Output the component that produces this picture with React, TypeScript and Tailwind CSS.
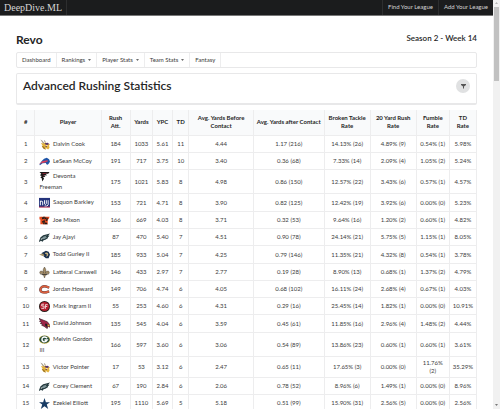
import React from "react";

type Team = "min" | "buf" | "atl" | "nyg" | "cin" | "phi" | "lar" | "no" | "chi" | "sf" | "ari" | "gb" | "dal";

const logos: Record<Team, React.ReactNode> = {
  min: (
    <>
      <path d="M5 3 9 9 4 9 8 14 6 17 11 22 15 23 14 19 20 23 23 19 22 14 24 11 18 10 14 7 11 9Z" fill="#e5b43c" />
      <path d="M3 1 7 3 12 9 9 10ZM11 2 13 3 15 7 12 7Z" fill="#a39b90" />
      <path d="M12 9 19 8 22 11 18 13 14 12ZM13 15 18 16 16 18Z" fill="#56356f" />
      <path d="M14 13 19 13 18 16Z" fill="#f8e7c9" />
      <path d="M6 14 11 17 15 23 10 21Z" fill="#9c7527" />
    </>
  ),
  buf: (
    <>
      <path d="M1 18 6 11 11 6 17 4 22 7 24 12 22 16 19 19 16 18 15 15 8 16 2 20Z" fill="#1f55a8" />
      <path d="M0 18 8 11 18 9 20 11 14 14 7 15Z" fill="#d9405c" />
    </>
  ),
  atl: (
    <>
      <path d="M1 2H23L20 6H14L18 9 11 10 14 13 9 13 11 17 7 23 6 16 3 14 6 11 2 9 5 6Z" fill="#171717" />
      <path d="M7 5 19 4 14 6 8 7ZM8 10 12 9 9 12Z" fill="#8f2636" />
    </>
  ),
  nyg: (
    <>
      <path d="M0 2H24V22H0Z" fill="#25347c" />
      <path d="M3 18V8M3 10Q7 7 8 11V18M12 7V15Q14 19 16 14V7M20 7V17Q19 21 12 20" fill="none" stroke="#fff" strokeWidth="2" />
      <path d="M0 21H24V23H0Z" fill="#b82a4b" />
    </>
  ),
  cin: (
    <>
      <path d="M1 4H23L21 9H19V20H3V10H1Z" fill="#e64c1f" />
      <path d="M6 4 11 8 7 9ZM15 4 17 8 12 10ZM7 13 13 14 7 17ZM20 5 18 13 14 12ZM15 15 19 20 12 20Z" fill="#171717" />
      <path d="M9 4H13L12 9 9 8ZM10 11 13 12 12 20 9 20Z" fill="#202020" />
    </>
  ),
  phi: (
    <>
      <path d="M0 20 3 12 9 7 24 3 20 8 23 8 19 12 20 13 14 17 10 18 8 21 4 19 1 22Z" fill="#24393d" />
      <path d="M8 11 18 7 14 11 18 11 12 15 7 16Z" fill="#7f9598" />
      <path d="M3 15 8 13 6 17Z" fill="#eef1f1" />
    </>
  ),
  lar: (
    <>
      <path d="M5 11 9 7 15 4 21 6 24 12 21 20 15 20 10 16Z" fill="#182e4d" />
      <path d="M14 8Q21 7 20 13 19 17 15 16L17 14Q18 10 13 11Z" fill="#c9b27e" />
      <path d="M0 12 9 10 12 15 8 15Z" fill="#a8946a" />
    </>
  ),
  no: (
    <>
      <path d="M12 0Q17 6 14 13 16 7 21 9 25 13 19 17 20 12 16 15L17 17 14 18 12 24 10 18 7 17 8 15Q4 12 5 17 -1 13 3 9 8 7 10 13 7 6 12 0Z" fill="#a58d66" stroke="#4b4235" strokeWidth="1" />
      <path d="M7 15H17V17H7Z" fill="#302d29" />
    </>
  ),
  chi: (
    <>
      <path d="M22 8Q13 3 7 6 1 10 4 16 9 21 22 16" fill="none" stroke="#3b3440" strokeWidth="5" />
      <path d="M22 8Q13 3 7 6 1 10 4 16 9 21 22 16" fill="none" stroke="#dd5f3c" strokeWidth="4" />
    </>
  ),
  sf: (
    <>
      <ellipse cx="12" cy="12" rx="12" ry="12" fill="#2b1b18" />
      <ellipse cx="12" cy="12" rx="10" ry="10" fill="#b51f2e" />
      <path d="M11 7H6V11H11V16H5M19 8H14V17M14 12H18" fill="none" stroke="#f3dede" strokeWidth="2" />
    </>
  ),
  ari: (
    <>
      <path d="M0 1 10 5 18 8 22 13 24 20 19 18 18 23 11 18 6 16 8 14 3 12 6 10 1 7 4 6Z" fill="#9f2448" stroke="#3a1a26" strokeWidth="1.5" />
      <path d="M18 14 23 15 22 19 19 17Z" fill="#e7b833" />
      <path d="M14 12 18 13 18 20 13 16Z" fill="#201c20" />
    </>
  ),
  gb: (
    <>
      <ellipse cx="12" cy="12" rx="12" ry="9" fill="#c9b34c" />
      <ellipse cx="12" cy="12" rx="11" ry="8" fill="#254b3b" />
      <path d="M18 9Q11 4 7 9 5 15 10 17 15 18 18 13H12" fill="none" stroke="#fff" strokeWidth="3" />
    </>
  ),
  dal: <path d="M12 0 15 9H24L17 14 20 24 12 18 4 24 7 14 0 9H9Z" fill="#173b64" />,
};

interface Player {
  name: string;
  team: Team;
  stats: string[];
  height?: string;
  wraps?: boolean;
}

const players: Player[] = [
  { name: "Dalvin Cook", team: "min", stats: ["184", "1033", "5.61", "11", "4.44", "1.17 (216)", "14.13% (26)", "4.89% (9)", "0.54% (1)", "5.98%"] },
  { name: "LeSean McCoy", team: "buf", stats: ["191", "717", "3.75", "10", "3.40", "0.36 (68)", "7.33% (14)", "2.09% (4)", "1.05% (2)", "5.24%"] },
  { name: "Devonta Freeman", team: "atl", height: "h-6", wraps: true, stats: ["175", "1021", "5.83", "8", "4.98", "0.86 (150)", "12.57% (22)", "3.43% (6)", "0.57% (1)", "4.57%"] },
  { name: "Saquon Barkley", team: "nyg", height: "h-[18px]", stats: ["153", "721", "4.71", "8", "3.90", "0.82 (125)", "12.42% (19)", "3.92% (6)", "0.00% (0)", "5.23%"] },
  { name: "Joe Mixon", team: "cin", stats: ["166", "669", "4.03", "8", "3.71", "0.32 (53)", "9.64% (16)", "1.20% (2)", "0.60% (1)", "4.82%"] },
  { name: "Jay Ajayi", team: "phi", stats: ["87", "470", "5.40", "7", "4.51", "0.90 (78)", "24.14% (21)", "5.75% (5)", "1.15% (1)", "8.05%"] },
  { name: "Todd Gurley II", team: "lar", height: "h-[18px]", stats: ["185", "933", "5.04", "7", "4.25", "0.79 (146)", "11.35% (21)", "4.32% (8)", "0.54% (1)", "3.78%"] },
  { name: "Latteral Carswell", team: "no", stats: ["146", "433", "2.97", "7", "2.77", "0.19 (28)", "8.90% (13)", "0.68% (1)", "1.37% (2)", "4.79%"] },
  { name: "Jordan Howard", team: "chi", stats: ["149", "706", "4.74", "6", "4.05", "0.68 (102)", "16.11% (24)", "2.68% (4)", "0.67% (1)", "4.03%"] },
  { name: "Mark Ingram II", team: "sf", stats: ["55", "253", "4.60", "6", "4.31", "0.29 (16)", "25.45% (14)", "1.82% (1)", "0.00% (0)", "10.91%"] },
  { name: "David Johnson", team: "ari", height: "h-[18px]", stats: ["135", "545", "4.04", "6", "3.59", "0.45 (61)", "11.85% (16)", "2.96% (4)", "1.48% (2)", "4.44%"] },
  { name: "Melvin Gordon III", team: "gb", height: "h-6", wraps: true, stats: ["166", "597", "3.60", "6", "3.06", "0.54 (89)", "13.86% (23)", "0.60% (1)", "0.60% (1)", "3.61%"] },
  { name: "Victor Pointer", team: "min", height: "h-[21px]", stats: ["17", "53", "3.12", "6", "2.47", "0.65 (11)", "17.65% (3)", "0.00% (0)", "11.76% (2)", "35.29%"] },
  { name: "Corey Clement", team: "phi", stats: ["67", "190", "2.84", "6", "2.06", "0.78 (52)", "8.96% (6)", "1.49% (1)", "0.00% (0)", "8.96%"] },
  { name: "Ezekiel Elliott", team: "dal", stats: ["195", "1110", "5.69", "5", "5.18", "0.51 (99)", "15.90% (31)", "2.56% (5)", "0.00% (0)", "2.56%"] },
];

const columns = [
  { label: "#", width: "w-[4%]" },
  { label: "Player", width: "w-[14.4%]" },
  { label: "Rush Att.", width: "w-[6.3%]" },
  { label: "Yards", width: "w-[4.9%]" },
  { label: "YPC", width: "w-[4.3%]" },
  { label: "TD", width: "w-[3.6%]" },
  { label: "Avg. Yards Before Contact", width: "w-[14%]" },
  { label: "Avg. Yards after Contact", width: "w-[15.4%]" },
  { label: "Broken Tackle Rate", width: "w-[10%]" },
  { label: "20 Yard Rush Rate", width: "w-[10%]" },
  { label: "Fumble Rate", width: "w-[7.2%]" },
  { label: "TD Rate", width: "w-[5.9%]" },
];

const tabs = [
  { label: "Dashboard" },
  { label: "Rankings", menu: true },
  { label: "Player Stats", menu: true },
  { label: "Team Stats", menu: true },
  { label: "Fantasy" },
];

function Caret() {
  return (
    <svg viewBox="0 0 4 2" className="h-[2px] w-[3px]" aria-hidden="true">
      <path d="M0 0H4L2 2Z" fill="currentColor" />
    </svg>
  );
}

function StatsTable() {
  return (
    <table className="mt-[5px] w-full table-fixed border-separate border-spacing-0 border-l border-[#ededee] text-center text-[6px] leading-[8px]">
      <thead>
        <tr className="h-[26px] bg-[#f9fafb]">
          {columns.map((c) => (
            <th key={c.label} className={`${c.width} border-r border-b border-[#ededee] px-[3px] pt-0 pb-px font-bold`}>
              {c.label}
            </th>
          ))}
        </tr>
      </thead>
      <tbody className="text-[#3c3c3c]">
        {players.map((p, i) => (
          <tr key={p.name} className={p.height ?? "h-[17px]"}>
            <td className="border-r border-b border-[#ededee] p-0">{i + 1}</td>
            <td
              className={`border-r border-b border-[#ededee] py-0 pl-1 text-left leading-[10px] ${p.wraps ? "pr-1" : "pr-0 whitespace-nowrap"}`}
            >
              <svg viewBox="0 0 24 24" className="mr-px inline-block size-[11px] align-middle" role="img" aria-label={p.team}>
                {logos[p.team]}
              </svg>{" "}
              <a href="#player">{p.name}</a>
            </td>
            {p.stats.map((s, j) => (
              <td key={j} className="border-r border-b border-[#ededee] px-[3px] py-0">
                {s}
              </td>
            ))}
          </tr>
        ))}
      </tbody>
    </table>
  );
}

export default function App() {
  return (
    <div className="flex h-screen overflow-hidden bg-white font-[Lato,sans-serif] text-[#262626]">
      <div className="min-w-0 flex-1 overflow-hidden">
        <header className="flex h-4 items-stretch justify-between border-b border-[#777] bg-[#1b1c1d] text-[#d5d5d5]">
          <a href="#home" className="flex items-center border-r border-[#2d2e2f] px-1 font-['Liberation_Serif',serif] text-[10px] leading-[14px]">
            DeepDive.ML
          </a>
          <nav className="flex text-[6px] leading-[14px]">
            <a href="#find" className="border-l border-[#2d2e2f] px-[5px]">Find Your League</a>
            <a href="#add" className="border-l border-[#2d2e2f] px-[5px]">Add Your League</a>
          </nav>
        </header>
        <main className="mx-4">
          <div className="flex h-9 items-center justify-between pt-3">
            <h1 className="text-[12px] leading-4 font-bold">Revo</h1>
            <p className="pb-1 text-[8px] leading-3 font-semibold">Season 2 - Week 14</p>
          </div>
          <nav className="flex h-4 rounded-[2px] border border-[#e8e8e9] text-[6px] leading-[12px] text-[#3c3c3c]">
            {tabs.map((t) => (
              <button key={t.label} type="button" className="flex items-center gap-[3px] border-r border-[#ededee] px-[5px]">
                {t.label}
                {t.menu && <Caret />}
              </button>
            ))}
          </nav>
          <section className="mt-[5px] flex h-8 items-start justify-between rounded-[2px] border border-b-2 border-[#e8e8e9] px-[6px] pt-[5px]">
            <h2 className="text-[12px] leading-[14px] font-semibold">Advanced Rushing Statistics</h2>
            <button type="button" aria-label="Filter" className="flex size-[14px] items-center justify-center rounded-full bg-[#e0e1e2] text-[#555]">
              <svg viewBox="0 0 10 10" className="size-[5px]" aria-hidden="true">
                <path d="M0 0H10V2L6 5V10L4 8V5L0 2Z" fill="currentColor" />
              </svg>
            </button>
          </section>
          <StatsTable />
        </main>
      </div>
      <div className="flex w-[7px] flex-col items-center justify-between bg-[#f1f1f1]" aria-hidden="true">
        <div className="flex w-full flex-col items-center">
          <svg viewBox="0 0 4 2" className="my-[2px] h-[2px] w-[3px]"><path d="M0 2H4L2 0Z" fill="#a3a3a3" /></svg>
          <div className="mt-px h-[74px] w-[5px] bg-[#c1c1c1]" />
        </div>
        <svg viewBox="0 0 4 2" className="my-[3px] h-[2px] w-[3px]"><path d="M0 0H4L2 2Z" fill="#505050" /></svg>
      </div>
    </div>
  );
}
